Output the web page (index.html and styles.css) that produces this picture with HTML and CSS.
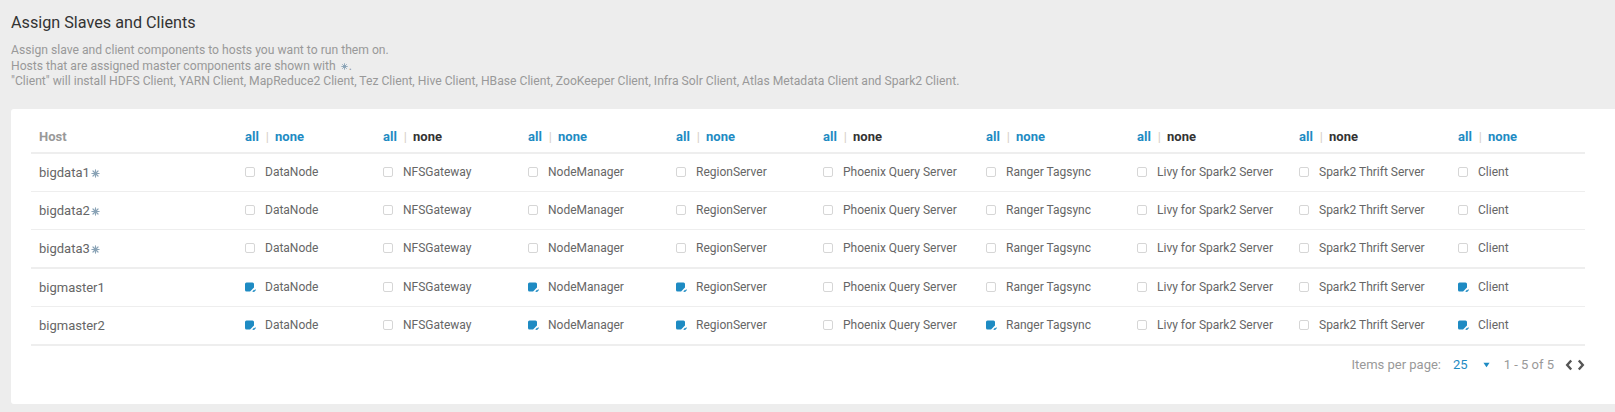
FILE: index.html
```html
<!DOCTYPE html>
<html lang="en">
<head>
<meta charset="utf-8">
<title>Assign Slaves and Clients</title>
<link rel="stylesheet" href="styles.css">
</head>
<body>
<div class="page">
  <h2 class="title">Assign Slaves and Clients</h2>
  <div class="desc">
    <div>Assign slave and client components to hosts you want to run them on.</div>
    <div>Hosts that are assigned master components are shown with <svg class="star star-sm" viewBox="0 0 10 10"><g stroke="currentColor" stroke-width="1.3" stroke-linecap="round"><path d="M5 1v8M1 5h8M2.2 2.2l5.6 5.6M7.8 2.2l-5.6 5.6"/></g><circle cx="5" cy="5" r="1.8" fill="currentColor"/></svg>.</div>
    <div>"Client" will install HDFS Client, YARN Client, MapReduce2 Client, Tez Client, Hive Client, HBase Client, ZooKeeper Client, Infra Solr Client, Atlas Metadata Client and Spark2 Client.</div>
  </div>

  <div class="card">
    <table class="grid">
      <colgroup>
        <col class="c1"><col class="c2"><col class="c3"><col class="c4"><col class="c5">
        <col class="c6"><col class="c7"><col class="c8"><col class="c9"><col class="c10">
      </colgroup>
      <thead>
        <tr>
          <th class="host-h">Host</th>
          <th><span class="lnk">all</span><span class="sep">|</span><span class="lnk">none</span></th>
          <th><span class="lnk">all</span><span class="sep">|</span><span class="dark">none</span></th>
          <th><span class="lnk">all</span><span class="sep">|</span><span class="lnk">none</span></th>
          <th><span class="lnk">all</span><span class="sep">|</span><span class="lnk">none</span></th>
          <th><span class="lnk">all</span><span class="sep">|</span><span class="dark">none</span></th>
          <th><span class="lnk">all</span><span class="sep">|</span><span class="lnk">none</span></th>
          <th><span class="lnk">all</span><span class="sep">|</span><span class="dark">none</span></th>
          <th><span class="lnk">all</span><span class="sep">|</span><span class="dark">none</span></th>
          <th><span class="lnk">all</span><span class="sep">|</span><span class="lnk">none</span></th>
        </tr>
      </thead>
      <tbody>
        <tr>
          <td class="host">bigdata1<svg class="star" viewBox="0 0 10 10"><g stroke="currentColor" stroke-width="1.3" stroke-linecap="round"><path d="M5 1v8M1 5h8M2.2 2.2l5.6 5.6M7.8 2.2l-5.6 5.6"/></g><circle cx="5" cy="5" r="1.8" fill="currentColor"/></svg></td>
          <td><span class="cb"><span class="box"></span>DataNode</span></td>
          <td><span class="cb"><span class="box"></span>NFSGateway</span></td>
          <td><span class="cb"><span class="box"></span>NodeManager</span></td>
          <td><span class="cb"><span class="box"></span>RegionServer</span></td>
          <td><span class="cb"><span class="box"></span>Phoenix Query Server</span></td>
          <td><span class="cb"><span class="box"></span>Ranger Tagsync</span></td>
          <td><span class="cb"><span class="box"></span>Livy for Spark2 Server</span></td>
          <td><span class="cb"><span class="box"></span>Spark2 Thrift Server</span></td>
          <td><span class="cb"><span class="box"></span>Client</span></td>
        </tr>
        <tr>
          <td class="host">bigdata2<svg class="star" viewBox="0 0 10 10"><g stroke="currentColor" stroke-width="1.3" stroke-linecap="round"><path d="M5 1v8M1 5h8M2.2 2.2l5.6 5.6M7.8 2.2l-5.6 5.6"/></g><circle cx="5" cy="5" r="1.8" fill="currentColor"/></svg></td>
          <td><span class="cb"><span class="box"></span>DataNode</span></td>
          <td><span class="cb"><span class="box"></span>NFSGateway</span></td>
          <td><span class="cb"><span class="box"></span>NodeManager</span></td>
          <td><span class="cb"><span class="box"></span>RegionServer</span></td>
          <td><span class="cb"><span class="box"></span>Phoenix Query Server</span></td>
          <td><span class="cb"><span class="box"></span>Ranger Tagsync</span></td>
          <td><span class="cb"><span class="box"></span>Livy for Spark2 Server</span></td>
          <td><span class="cb"><span class="box"></span>Spark2 Thrift Server</span></td>
          <td><span class="cb"><span class="box"></span>Client</span></td>
        </tr>
        <tr class="thick">
          <td class="host">bigdata3<svg class="star" viewBox="0 0 10 10"><g stroke="currentColor" stroke-width="1.3" stroke-linecap="round"><path d="M5 1v8M1 5h8M2.2 2.2l5.6 5.6M7.8 2.2l-5.6 5.6"/></g><circle cx="5" cy="5" r="1.8" fill="currentColor"/></svg></td>
          <td><span class="cb"><span class="box"></span>DataNode</span></td>
          <td><span class="cb"><span class="box"></span>NFSGateway</span></td>
          <td><span class="cb"><span class="box"></span>NodeManager</span></td>
          <td><span class="cb"><span class="box"></span>RegionServer</span></td>
          <td><span class="cb"><span class="box"></span>Phoenix Query Server</span></td>
          <td><span class="cb"><span class="box"></span>Ranger Tagsync</span></td>
          <td><span class="cb"><span class="box"></span>Livy for Spark2 Server</span></td>
          <td><span class="cb"><span class="box"></span>Spark2 Thrift Server</span></td>
          <td><span class="cb"><span class="box"></span>Client</span></td>
        </tr>
        <tr>
          <td class="host">bigmaster1</td>
          <td><span class="cb"><svg class="chk" viewBox="0 0 11 10"><rect x="0" y="0.5" width="9" height="9" rx="1.5" fill="#1e8bc3"/><path d="M5.6 10 L10 5.6" stroke="#fff" stroke-width="1.5"/><path d="M8.3 10 L10.6 7.7" stroke="#1e8bc3" stroke-width="1.1"/></svg>DataNode</span></td>
          <td><span class="cb"><span class="box"></span>NFSGateway</span></td>
          <td><span class="cb"><svg class="chk" viewBox="0 0 11 10"><rect x="0" y="0.5" width="9" height="9" rx="1.5" fill="#1e8bc3"/><path d="M5.6 10 L10 5.6" stroke="#fff" stroke-width="1.5"/><path d="M8.3 10 L10.6 7.7" stroke="#1e8bc3" stroke-width="1.1"/></svg>NodeManager</span></td>
          <td><span class="cb"><svg class="chk" viewBox="0 0 11 10"><rect x="0" y="0.5" width="9" height="9" rx="1.5" fill="#1e8bc3"/><path d="M5.6 10 L10 5.6" stroke="#fff" stroke-width="1.5"/><path d="M8.3 10 L10.6 7.7" stroke="#1e8bc3" stroke-width="1.1"/></svg>RegionServer</span></td>
          <td><span class="cb"><span class="box"></span>Phoenix Query Server</span></td>
          <td><span class="cb"><span class="box"></span>Ranger Tagsync</span></td>
          <td><span class="cb"><span class="box"></span>Livy for Spark2 Server</span></td>
          <td><span class="cb"><span class="box"></span>Spark2 Thrift Server</span></td>
          <td><span class="cb"><svg class="chk" viewBox="0 0 11 10"><rect x="0" y="0.5" width="9" height="9" rx="1.5" fill="#1e8bc3"/><path d="M5.6 10 L10 5.6" stroke="#fff" stroke-width="1.5"/><path d="M8.3 10 L10.6 7.7" stroke="#1e8bc3" stroke-width="1.1"/></svg>Client</span></td>
        </tr>
        <tr class="thick">
          <td class="host">bigmaster2</td>
          <td><span class="cb"><svg class="chk" viewBox="0 0 11 10"><rect x="0" y="0.5" width="9" height="9" rx="1.5" fill="#1e8bc3"/><path d="M5.6 10 L10 5.6" stroke="#fff" stroke-width="1.5"/><path d="M8.3 10 L10.6 7.7" stroke="#1e8bc3" stroke-width="1.1"/></svg>DataNode</span></td>
          <td><span class="cb"><span class="box"></span>NFSGateway</span></td>
          <td><span class="cb"><svg class="chk" viewBox="0 0 11 10"><rect x="0" y="0.5" width="9" height="9" rx="1.5" fill="#1e8bc3"/><path d="M5.6 10 L10 5.6" stroke="#fff" stroke-width="1.5"/><path d="M8.3 10 L10.6 7.7" stroke="#1e8bc3" stroke-width="1.1"/></svg>NodeManager</span></td>
          <td><span class="cb"><svg class="chk" viewBox="0 0 11 10"><rect x="0" y="0.5" width="9" height="9" rx="1.5" fill="#1e8bc3"/><path d="M5.6 10 L10 5.6" stroke="#fff" stroke-width="1.5"/><path d="M8.3 10 L10.6 7.7" stroke="#1e8bc3" stroke-width="1.1"/></svg>RegionServer</span></td>
          <td><span class="cb"><span class="box"></span>Phoenix Query Server</span></td>
          <td><span class="cb"><svg class="chk" viewBox="0 0 11 10"><rect x="0" y="0.5" width="9" height="9" rx="1.5" fill="#1e8bc3"/><path d="M5.6 10 L10 5.6" stroke="#fff" stroke-width="1.5"/><path d="M8.3 10 L10.6 7.7" stroke="#1e8bc3" stroke-width="1.1"/></svg>Ranger Tagsync</span></td>
          <td><span class="cb"><span class="box"></span>Livy for Spark2 Server</span></td>
          <td><span class="cb"><span class="box"></span>Spark2 Thrift Server</span></td>
          <td><span class="cb"><svg class="chk" viewBox="0 0 11 10"><rect x="0" y="0.5" width="9" height="9" rx="1.5" fill="#1e8bc3"/><path d="M5.6 10 L10 5.6" stroke="#fff" stroke-width="1.5"/><path d="M8.3 10 L10.6 7.7" stroke="#1e8bc3" stroke-width="1.1"/></svg>Client</span></td>
        </tr>
      </tbody>
    </table>

    <div class="pager">
      <span class="pp-label">Items per page:</span>
      <span class="pp-val">25</span>
      <svg class="caret" viewBox="0 0 8 6"><path d="M0.5 0.5h7L4 5.5z" fill="#1e8bc3"/></svg>
      <span class="range">1 - 5 of 5</span>
      <span class="arrows">
        <svg class="arr" viewBox="0 0 8 12"><path d="M6.2 1.5L2.2 6l4 4.5" fill="none" stroke="#555" stroke-width="2.4"/></svg>
        <svg class="arr" viewBox="0 0 8 12"><path d="M1.8 1.5L5.8 6l-4 4.5" fill="none" stroke="#555" stroke-width="2.4"/></svg>
      </span>
    </div>
  </div>
</div>
</body>
</html>
```

FILE: styles.css
```css
* { box-sizing: border-box; }

html, body {
  margin: 0;
  padding: 0;
  background: #ededed;
  font-family: Roboto, "Liberation Sans", Arial, sans-serif;
  overflow: hidden;
}

.page {
  padding: 13px 0 0 11px;
}

.title {
  margin: 0;
  font-size: 16.2px;
  line-height: 20px;
  font-weight: 400;
  color: #333;
}

.desc {
  margin-top: 10px;
  font-size: 12.15px;
  line-height: 15.6px;
  color: #999;
}

.star {
  width: 9px;
  height: 9px;
  margin-left: 1px;
  color: #8aa3b6;
  vertical-align: -1px;
}

.star-sm {
  width: 7px;
  height: 7px;
  margin-left: 2px;
  margin-right: 1px;
  vertical-align: 0;
}

.card {
  margin-top: 19px;
  background: #fff;
  border-radius: 3px 0 0 3px;
  padding: 12px 30px 29px 20px;
}

.grid {
  width: 100%;
  table-layout: fixed;
  border-collapse: separate;
  border-spacing: 0;
}

.c1 { width: 206px; }
.c2 { width: 138px; }
.c3 { width: 145px; }
.c4 { width: 148px; }
.c5 { width: 147px; }
.c6 { width: 163px; }
.c7 { width: 151px; }
.c8 { width: 162px; }
.c9 { width: 159px; }
.c10 { width: 135px; }

.grid th {
  box-sizing: content-box;
  height: 31px;
  padding: 0 8px;
  text-align: left;
  font-size: 13px;
  font-weight: 700;
  border-bottom: 2px solid #eeeeee;
  white-space: nowrap;
  vertical-align: middle;
}

.host-h { color: #999; }

.lnk { color: #1e8bc3; }
.dark { color: #333; }
.sep {
  color: #d8d0c8;
  font-weight: 400;
  margin: 0 6px 0 7px;
}

.grid td {
  box-sizing: content-box;
  height: 37px;
  padding: 0 8px;
  font-size: 12px;
  color: #666;
  border-bottom: 1px solid #eeeeee;
  white-space: nowrap;
  vertical-align: middle;
}

.grid tr.thick td { border-bottom-width: 2px; }

.grid td.host {
  font-size: 13px;
  color: #666;
}

.cb {
  display: inline-flex;
  align-items: center;
}

.box {
  width: 10px;
  height: 10px;
  border: 1px solid #d6d6d6;
  border-radius: 2px;
  background: #fff;
  margin-right: 10px;
  flex: none;
}

.chk {
  width: 11px;
  height: 10px;
  margin-right: 9px;
  flex: none;
}

.pager {
  margin-top: 9px;
  height: 20px;
  display: flex;
  justify-content: flex-end;
  align-items: center;
  font-size: 13px;
  color: #999;
}

.pp-val {
  color: #1e8bc3;
  margin-left: 12px;
}

.caret {
  width: 7px;
  height: 6px;
  margin-left: 15px;
}

.range {
  margin-left: 14px;
}

.arrows {
  display: flex;
  align-items: center;
  gap: 4px;
  margin-left: 11px;
}

.arr {
  width: 8px;
  height: 12px;
}
```
